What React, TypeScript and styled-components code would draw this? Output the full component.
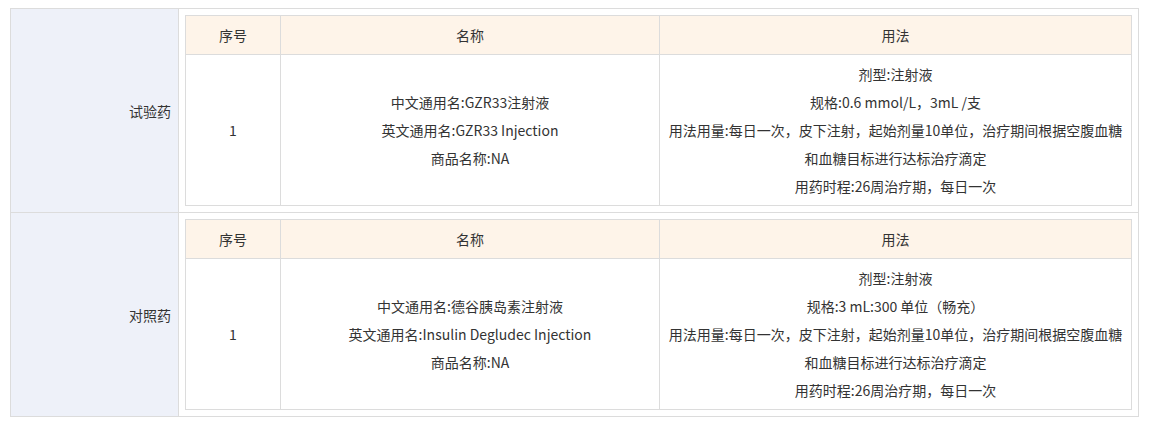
import React from "react";
import styled, { createGlobalStyle } from "styled-components";

const GlobalStyle = createGlobalStyle`
  body {
    margin: 8px 10px;
    background: #fff;
    font-family: "Noto Sans CJK SC", "Noto Sans", sans-serif;
    font-size: 14px;
    color: #333;
  }
`;

const OuterTable = styled.table`
  width: 1129px;
  border-collapse: collapse;
  border: 1px solid #dcdcdc;
`;

const LabelCell = styled.th`
  width: 160px;
  background: #eef1f9;
  border: 1px solid #dcdcdc;
  text-align: right;
  padding: 0 7px 0 0;
  font-weight: normal;
  vertical-align: middle;
`;

const HolderCell = styled.td`
  border: 1px solid #dcdcdc;
  padding: 6px;
  background: #fff;
`;

const InnerTable = styled.table`
  width: 100%;
  border-collapse: collapse;
`;

const HeadCell = styled.th<{ $w?: number }>`
  width: ${(p) => (p.$w ? `${p.$w}px` : "auto")};
  height: 38px;
  background: #fef4e9;
  border: 1px solid #dcdcdc;
  font-weight: normal;
  text-align: center;
  padding: 0;
`;

const BodyCell = styled.td`
  border: 1px solid #dcdcdc;
  text-align: center;
  vertical-align: middle;
  padding: 5px 6px;
  line-height: 28px;
`;

const Line = styled.div`
  line-height: 28px;
  white-space: nowrap;
`;

type Drug = {
  label: string;
  names: string[];
  usage: string[];
};

const drugs: Drug[] = [
  {
    label: "试验药",
    names: ["中文通用名:GZR33注射液", "英文通用名:GZR33 Injection", "商品名称:NA"],
    usage: [
      "剂型:注射液",
      "规格:0.6 mmol/L，3mL /支",
      "用法用量:每日一次，皮下注射，起始剂量10单位，治疗期间根据空腹血糖",
      "和血糖目标进行达标治疗滴定",
      "用药时程:26周治疗期，每日一次",
    ],
  },
  {
    label: "对照药",
    names: [
      "中文通用名:德谷胰岛素注射液",
      "英文通用名:Insulin Degludec Injection",
      "商品名称:NA",
    ],
    usage: [
      "剂型:注射液",
      "规格:3 mL:300 单位（畅充）",
      "用法用量:每日一次，皮下注射，起始剂量10单位，治疗期间根据空腹血糖",
      "和血糖目标进行达标治疗滴定",
      "用药时程:26周治疗期，每日一次",
    ],
  },
];

export default function App() {
  return (
    <>
      <GlobalStyle />
      <OuterTable>
        <tbody>
          {drugs.map((d) => (
            <tr key={d.label}>
              <LabelCell>{d.label}</LabelCell>
              <HolderCell>
                <InnerTable>
                  <thead>
                    <tr>
                      <HeadCell $w={94}>序号</HeadCell>
                      <HeadCell $w={378}>名称</HeadCell>
                      <HeadCell>用法</HeadCell>
                    </tr>
                  </thead>
                  <tbody>
                    <tr>
                      <BodyCell>1</BodyCell>
                      <BodyCell>
                        {d.names.map((n) => (
                          <Line key={n}>{n}</Line>
                        ))}
                      </BodyCell>
                      <BodyCell>
                        {d.usage.map((u) => (
                          <Line key={u}>{u}</Line>
                        ))}
                      </BodyCell>
                    </tr>
                  </tbody>
                </InnerTable>
              </HolderCell>
            </tr>
          ))}
        </tbody>
      </OuterTable>
    </>
  );
}
